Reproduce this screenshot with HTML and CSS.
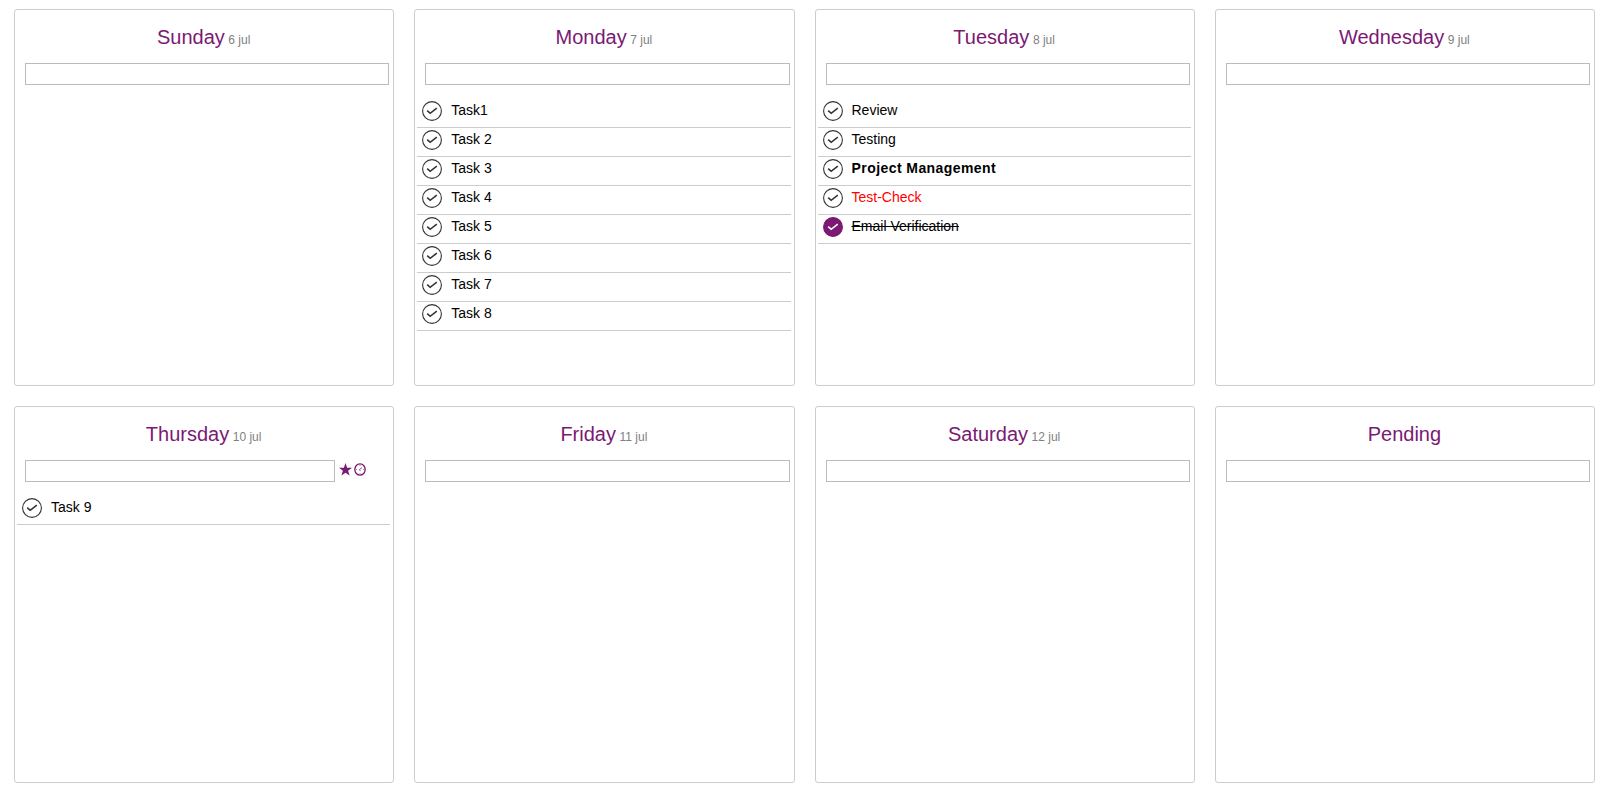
FILE: index.html
```html
<!DOCTYPE html>
<html lang="en">
<head>
<meta charset="utf-8">
<title>Weekly tasks</title>
<link rel="stylesheet" href="styles.css">
</head>
<body>
<svg class="defs" aria-hidden="true">
  <symbol id="check" viewBox="0 0 20 20">
    <circle class="ring" cx="10" cy="10" r="9.4"/>
    <path class="tick" d="M5.2 9.6 8.2 12.3 14.8 7.2"/>
  </symbol>
</svg>
<main class="week">
  <section class="day">
    <h2 class="title">Sunday <small class="date">6 jul</small></h2>
    <div class="entry"><input class="field" type="text" aria-label="New task"></div>
  </section>
  <section class="day">
    <h2 class="title">Monday <small class="date">7 jul</small></h2>
    <div class="entry"><input class="field" type="text" aria-label="New task"></div>
    <ul class="tasks">
      <li class="task"><svg class="icon"><use href="#check"/></svg><span class="label">Task1</span></li>
      <li class="task"><svg class="icon"><use href="#check"/></svg><span class="label">Task 2</span></li>
      <li class="task"><svg class="icon"><use href="#check"/></svg><span class="label">Task 3</span></li>
      <li class="task"><svg class="icon"><use href="#check"/></svg><span class="label">Task 4</span></li>
      <li class="task"><svg class="icon"><use href="#check"/></svg><span class="label">Task 5</span></li>
      <li class="task"><svg class="icon"><use href="#check"/></svg><span class="label">Task 6</span></li>
      <li class="task"><svg class="icon"><use href="#check"/></svg><span class="label">Task 7</span></li>
      <li class="task"><svg class="icon"><use href="#check"/></svg><span class="label">Task 8</span></li>
    </ul>
  </section>
  <section class="day">
    <h2 class="title">Tuesday <small class="date">8 jul</small></h2>
    <div class="entry"><input class="field" type="text" aria-label="New task"></div>
    <ul class="tasks">
      <li class="task"><svg class="icon"><use href="#check"/></svg><span class="label">Review</span></li>
      <li class="task"><svg class="icon"><use href="#check"/></svg><span class="label">Testing</span></li>
      <li class="task important"><svg class="icon"><use href="#check"/></svg><span class="label">Project Management</span></li>
      <li class="task urgent"><svg class="icon"><use href="#check"/></svg><span class="label">Test-Check</span></li>
      <li class="task done"><svg class="icon"><use href="#check"/></svg><span class="label">Email Verification</span></li>
    </ul>
  </section>
  <section class="day">
    <h2 class="title">Wednesday <small class="date">9 jul</small></h2>
    <div class="entry"><input class="field" type="text" aria-label="New task"></div>
  </section>
  <section class="day">
    <h2 class="title">Thursday <small class="date">10 jul</small></h2>
    <div class="entry editing">
      <input class="field" type="text" aria-label="New task">
      <svg class="star" viewBox="0 0 12 12"><path d="M6 0 7.5 4.3H12L8.4 7.1 9.8 11.6 6 8.9 2.2 11.6 3.6 7.1 0 4.3H4.5Z"/></svg>
      <svg class="clock" viewBox="0 0 12 13"><ellipse cx="6" cy="6.5" rx="5.2" ry="5.7"/><path d="M7.8 4.7 5.5 6.6 6.3 8.1M6 2v.8M6 10.3v.8M2 6.5h.8M9.3 6.5h.8"/></svg>
    </div>
    <ul class="tasks">
      <li class="task"><svg class="icon"><use href="#check"/></svg><span class="label">Task 9</span></li>
    </ul>
  </section>
  <section class="day">
    <h2 class="title">Friday <small class="date">11 jul</small></h2>
    <div class="entry"><input class="field" type="text" aria-label="New task"></div>
  </section>
  <section class="day">
    <h2 class="title">Saturday <small class="date">12 jul</small></h2>
    <div class="entry"><input class="field" type="text" aria-label="New task"></div>
  </section>
  <section class="day">
    <h2 class="title">Pending</h2>
    <div class="entry"><input class="field" type="text" aria-label="New task"></div>
  </section>
</main>
</body>
</html>
```
FILE: styles.css
```css
* { box-sizing: border-box; }

body {
  margin: 0;
  background: #fff;
  color: #000;
  font: 14px/16px "Liberation Sans", Arial, sans-serif;
}

.defs { display: none; }

.week {
  display: grid;
  grid-template-columns: repeat(4, 1fr);
  grid-auto-rows: 377px;
  gap: 20px;
  padding: 9px 8px 0 14px;
}

.day {
  border: 1px solid #ccc;
  border-radius: 3px;
}

.title {
  margin: 0;
  padding: 15px 1px 0 0;
  height: 53px;
  color: #7b1973;
  font-size: 20px;
  font-weight: 400;
  line-height: 24px;
  text-align: center;
}

.date {
  margin-left: -2px;
  color: #808080;
  font-size: 12px;
}

.entry {
  display: flex;
  padding: 0 4px 0 10px;
}

.field {
  flex: 1;
  min-width: 0;
  height: 22px;
  margin: 0;
  padding: 0 4px;
  border: 1px solid #bbb;
  border-radius: 0;
  background: #fff;
  outline: 0;
}

.editing .field { flex: 0 0 310px; }

.star {
  width: 13px;
  height: 13px;
  margin: 3px 0 0 4px;
  fill: #7b1973;
}

.clock {
  width: 12px;
  height: 13px;
  margin: 3px 0 0 2px;
  fill: none;
  stroke: #7b1973;
  stroke-width: 1.3;
}

.clock path { stroke-width: .8; }

.tasks {
  margin: 14px 3px 0 2px;
  padding: 0;
  list-style: none;
}

.task {
  display: flex;
  gap: 9px;
  height: 29px;
  padding: 2px 0 0 5px;
  border-bottom: 1px solid #ccc;
}

.icon {
  width: 20px;
  height: 20px;
  fill: none;
  stroke: #333;
  stroke-width: 1.1;
}

.label { padding-top: 1px; }

.important { font-weight: 700; }
.important .label { letter-spacing: .43px; }
.urgent { color: #f00; }
.done .label { text-decoration: line-through; }
.done .icon {
  --tick: #fff;
  fill: #7b1973;
  stroke: #7b1973;
}

.tick {
  fill: none;
  stroke: var(--tick, #333);
  stroke-width: 1.6;
}
```
